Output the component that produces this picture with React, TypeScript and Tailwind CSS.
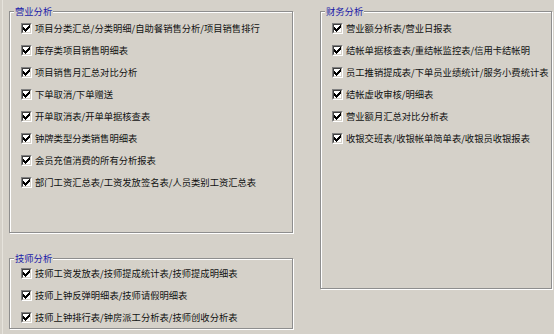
import React from "react";

const FONT = { fontFamily: '"Noto Sans CJK SC", "Noto Sans", sans-serif' };

function Check() {
  return (
    <span className="flex w-[11px] h-[11px] shrink-0 border border-t-[#808080] border-l-[#808080] border-b-white border-r-white">
      <span className="flex w-[9px] h-[9px] border border-t-[#404040] border-l-[#404040] border-b-[#d4d0c8] border-r-[#d4d0c8] bg-white">
        <svg width="7" height="7" viewBox="0 0 7 7" shapeRendering="crispEdges">
          <path
            d="M6 0h1v1H6z M5 1h2v1H5z M0 2h1v1H0z M4 2h3v1H4z M0 3h2v1H0z M3 3h3v1H3z M0 4h5v1H0z M1 5h3v1H1z M2 6h1v1H2z"
            fill="#000"
          />
        </svg>
      </span>
    </span>
  );
}

function Item({ label }: { label: string }) {
  return (
    <div className="flex h-[22px] items-center gap-[3px]">
      <Check />
      <span className="text-[9.3px] leading-[12px] text-[#111] whitespace-nowrap">{label}</span>
    </div>
  );
}

function Group({
  title,
  items,
  className,
  pt,
}: {
  title: string;
  items: string[];
  className: string;
  pt: string;
}) {
  return (
    <div
      className={`relative border border-[#8e8e8e] shadow-[inset_1px_1px_0_#ffffff,1px_1px_0_#ffffff] ${className}`}
    >
      <span className="absolute top-[-7px] left-[4px] px-[1px] bg-[#d5d1c9] text-[9.3px] leading-[12px] text-[#1a1aa8] whitespace-nowrap">
        {title}
      </span>
      <div className={`flex flex-col pl-[11px] ${pt}`}>
        {items.map((t) => (
          <Item key={t} label={t} />
        ))}
      </div>
    </div>
  );
}

export default function App() {
  return (
    <div
      className="w-[554px] h-[334px] bg-[#d5d1c9] flex pt-[11px] pl-[9px] overflow-hidden relative"
      style={FONT}
    >
      <div className="absolute left-[2px] top-0 bottom-0 w-px bg-[#e6e3dc]" />
      <div className="flex flex-col w-[284px] gap-[25px]">
        <Group
          title="营业分析"
          className="h-[222px]"
          pt="pt-[5px]"
          items={[
            "项目分类汇总/分类明细/自助餐销售分析/项目销售排行",
            "库存类项目销售明细表",
            "项目销售月汇总对比分析",
            "下单取消/下单赠送",
            "开单取消表/开单单据核查表",
            "钟牌类型分类销售明细表",
            "会员充值消费的所有分析报表",
            "部门工资汇总表/工资发放签名表/人员类别工资汇总表",
          ]}
        />
        <Group
          title="技师分析"
          className="h-[71px]"
          pt="pt-[3px]"
          items={[
            "技师工资发放表/技师提成统计表/技师提成明细表",
            "技师上钟反弹明细表/技师请假明细表",
            "技师上钟排行表/钟房派工分析表/技师创收分析表",
          ]}
        />
      </div>
      <div className="ml-[27px] w-[232px]">
        <Group
          title="财务分析"
          className="h-[278px]"
          pt="pt-[5px]"
          items={[
            "营业额分析表/营业日报表",
            "结帐单据核查表/重结帐监控表/信用卡结帐明",
            "员工推销提成表/下单员业绩统计/服务小费统计表",
            "结帐虚收审核/明细表",
            "营业额月汇总对比分析表",
            "收银交班表/收银帐单简单表/收银员收银报表",
          ]}
        />
      </div>
    </div>
  );
}
